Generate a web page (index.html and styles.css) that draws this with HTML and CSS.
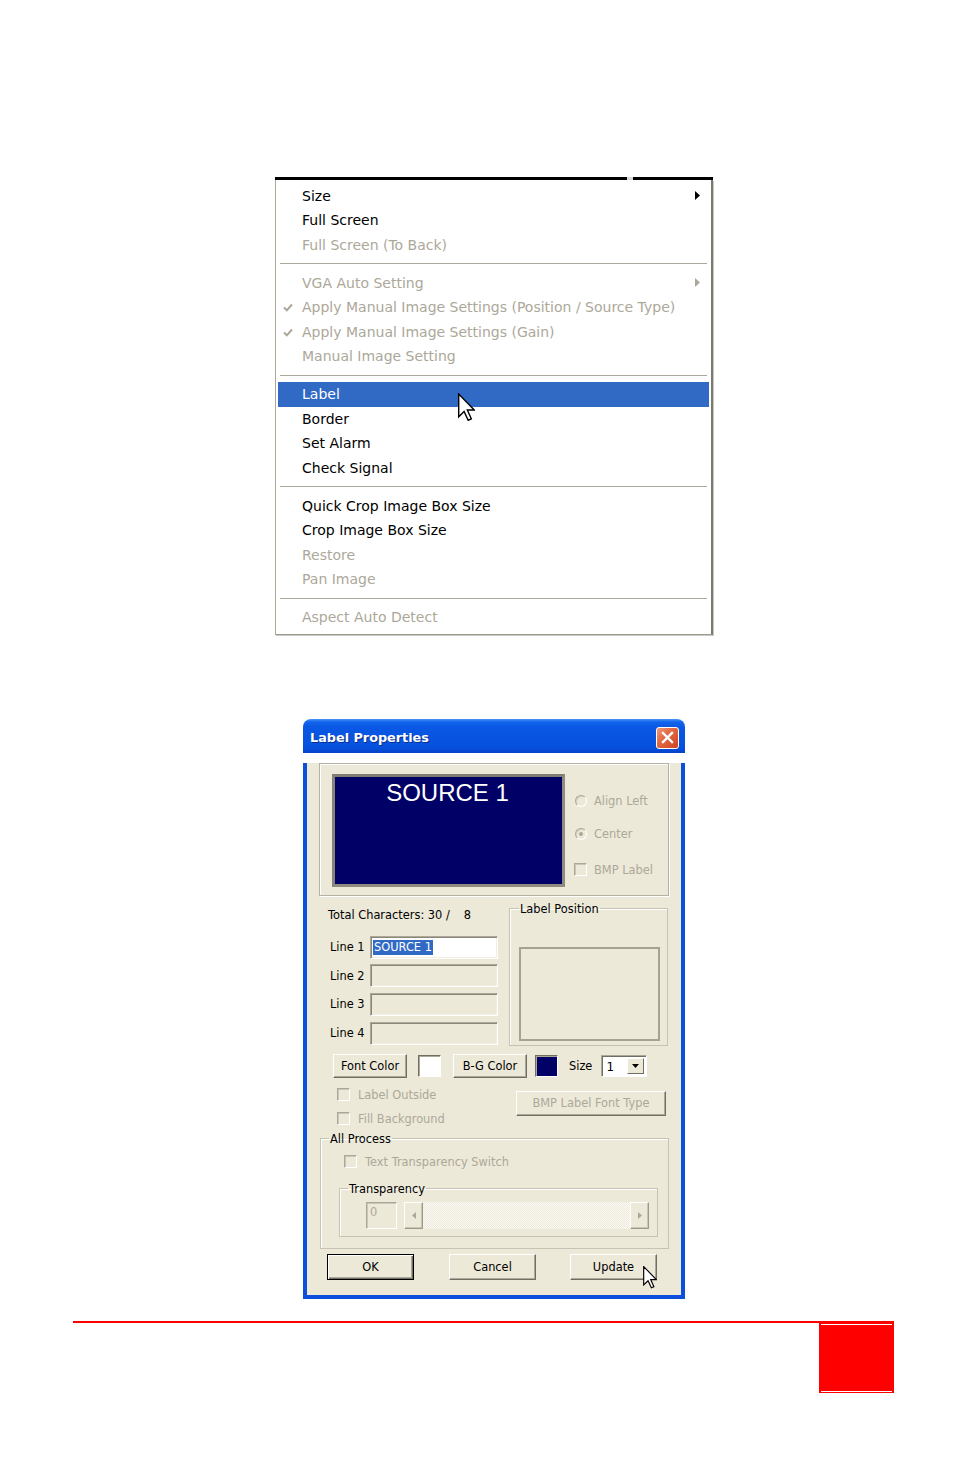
FILE: index.html
```html
<!DOCTYPE html>
<html lang="en">
<head>
<meta charset="utf-8">
<title>Label Properties</title>
<link rel="stylesheet" href="styles.css">
</head>
<body>
<div class="page">

  <div class="menu">
    <div class="menu-top"><span class="seg seg-a"></span><span class="notch"></span><span class="seg seg-b"></span></div>
    <div class="menu-body">
      <div class="item"><span class="chk"></span><span class="txt">Size</span><svg class="sub" viewBox="0 0 5 9" width="5" height="9"><polygon points="0,0 5,4.5 0,9" fill="#000"/></svg></div>
      <div class="item"><span class="chk"></span><span class="txt">Full Screen</span></div>
      <div class="item off"><span class="chk"></span><span class="txt">Full Screen (To Back)</span></div>
      <div class="sep"></div>
      <div class="item off"><span class="chk"></span><span class="txt">VGA Auto Setting</span><svg class="sub" viewBox="0 0 5 9" width="5" height="9"><polygon points="0,0 5,4.5 0,9" fill="#aca899"/></svg></div>
      <div class="item off"><span class="chk"><svg viewBox="0 0 10 9" width="10" height="9"><path d="M1 4.5 L3.8 7.3 L9 1.5" fill="none" stroke="#aca899" stroke-width="2"/></svg></span><span class="txt">Apply Manual Image Settings (Position / Source Type)</span></div>
      <div class="item off"><span class="chk"><svg viewBox="0 0 10 9" width="10" height="9"><path d="M1 4.5 L3.8 7.3 L9 1.5" fill="none" stroke="#aca899" stroke-width="2"/></svg></span><span class="txt">Apply Manual Image Settings (Gain)</span></div>
      <div class="item off"><span class="chk"></span><span class="txt">Manual Image Setting</span></div>
      <div class="sep"></div>
      <div class="item hot"><span class="chk"></span><span class="txt">Label</span>
        <svg class="cursor menu-cursor" viewBox="0 0 12 20" width="17" height="29"><path d="M0.5 0.5 L0.5 16.5 L4.3 12.8 L7.2 19 L9.4 18 L6.6 11.8 L11.5 11.8 Z" fill="#fff" stroke="#000" stroke-width="1" stroke-linejoin="miter"/></svg>
      </div>
      <div class="item"><span class="chk"></span><span class="txt">Border</span></div>
      <div class="item"><span class="chk"></span><span class="txt">Set Alarm</span></div>
      <div class="item"><span class="chk"></span><span class="txt">Check Signal</span></div>
      <div class="sep"></div>
      <div class="item"><span class="chk"></span><span class="txt">Quick Crop Image Box Size</span></div>
      <div class="item"><span class="chk"></span><span class="txt">Crop Image Box Size</span></div>
      <div class="item off"><span class="chk"></span><span class="txt">Restore</span></div>
      <div class="item off"><span class="chk"></span><span class="txt">Pan Image</span></div>
      <div class="sep"></div>
      <div class="item off"><span class="chk"></span><span class="txt">Aspect Auto Detect</span></div>
    </div>
  </div>

  <div class="dialog">
    <div class="titlebar">
      <span class="title">Label Properties</span>
      <span class="close"><svg viewBox="0 0 21 20" width="21" height="20"><path d="M6 5 L15 14 M15 5 L6 14" stroke="#fff" stroke-width="2.4" stroke-linecap="square"/></svg></span>
    </div>
    <div class="dbody">

      <div class="grp-top">
        <div class="preview"><span class="preview-text">SOURCE 1</span></div>
        <div class="opts">
          <div class="opt o1"><span class="radio"></span><span class="dis">Align Left</span></div>
          <div class="opt o2"><span class="radio on"></span><span class="dis">Center</span></div>
          <div class="opt o3"><span class="cbox"></span><span class="dis">BMP Label</span></div>
        </div>
      </div>

      <div class="mid">
        <div class="lines">
          <div class="total">Total Characters: 30 /<span class="count">8</span></div>
          <div class="lrow first"><span class="lname">Line 1</span><span class="edit white"><span class="sel">SOURCE 1</span></span></div>
          <div class="lrow"><span class="lname">Line 2</span><span class="edit"></span></div>
          <div class="lrow"><span class="lname">Line 3</span><span class="edit"></span></div>
          <div class="lrow"><span class="lname">Line 4</span><span class="edit"></span></div>
        </div>
        <fieldset class="fs pos">
          <legend>Label Position</legend>
          <div class="posbox"></div>
        </fieldset>
      </div>

      <div class="colors">
        <span class="btn b-font">Font Color</span>
        <span class="swatch sw-white"></span>
        <span class="btn b-bg">B-G Color</span>
        <span class="swatch sw-navy"></span>
        <span class="size-lbl">Size</span>
        <span class="combo"><span class="combo-val">1</span><span class="combo-btn"><svg viewBox="0 0 7 4" width="7" height="4"><polygon points="0,0 7,0 3.5,4" fill="#000"/></svg></span></span>
      </div>

      <div class="checks">
        <div class="ck-col">
          <div class="ck"><span class="cbox"></span><span class="dis">Label Outside</span></div>
          <div class="ck"><span class="cbox"></span><span class="dis">Fill Background</span></div>
        </div>
        <span class="btn b-bmp dis">BMP Label Font Type</span>
      </div>

      <fieldset class="fs allp">
        <legend>All Process</legend>
        <div class="ck tts"><span class="cbox"></span><span class="dis">Text Transparency Switch</span></div>
        <fieldset class="fs trans">
          <legend>Transparency</legend>
          <div class="trow">
            <span class="tval dis">0</span>
            <span class="scroll">
              <span class="sbtn"><svg viewBox="0 0 4 7" width="4" height="7"><polygon points="4,0 0,3.5 4,7" fill="#aca899"/></svg></span>
              <span class="track"></span>
              <span class="sbtn"><svg viewBox="0 0 4 7" width="4" height="7"><polygon points="0,0 4,3.5 0,7" fill="#aca899"/></svg></span>
            </span>
          </div>
        </fieldset>
      </fieldset>

      <div class="actions">
        <span class="btn act ok">OK</span>
        <span class="btn act cancel">Cancel</span>
        <span class="btn act update">Update
          <svg class="cursor dlg-cursor" viewBox="0 0 12 20" width="14" height="23"><path d="M0.5 0.5 L0.5 16.5 L4.3 12.8 L7.2 19 L9.4 18 L6.6 11.8 L11.5 11.8 Z" fill="#fff" stroke="#000" stroke-width="1"/></svg>
        </span>
      </div>

    </div>
  </div>

  <div class="footer"><div class="tab"><div class="tab-in"></div></div></div>

</div>
</body>
</html>
```

FILE: styles.css
```css
html, body { margin: 0; padding: 0; background: #fff; }
body { font-family: "DejaVu Sans", Verdana, sans-serif; }
.page { width: 954px; height: 1475px; overflow: hidden; padding-top: 177px; box-sizing: border-box; }

/* ---------- context menu ---------- */
.menu { margin-left: 275px; width: 438px; }
.menu-top { display: flex; height: 3px; }
.seg { background: #000; height: 3px; }
.seg-a { width: 352px; }
.notch { width: 6px; background: #d8d8d8; }
.seg-b { flex: 1; }
.menu-body {
  background: #fff;
  border-left: 1px solid #aca899;
  border-right: 2px solid #7b7970;
  border-bottom: 1px solid #9d9a8c;
  box-shadow: 1px 1px 0 #c9c9c9;
  padding: 3.5px 2px 4px 2px;
  font-size: 14px;
  color: #000;
}
.item { position: relative; display: flex; align-items: center; height: 24.5px; line-height: 24.5px; padding-right: 9px; }
.item .chk { width: 24px; flex: none; display: flex; align-items: center; }
.item .chk svg { margin-left: 5px; margin-top: 1px; }
.item .txt { flex: 1; white-space: nowrap; }
.item.off { color: #aca899; }
.item.hot { background: #316ac5; color: #fff; }
.sep { margin: 6px 2px 6.5px; height: 0; border-top: 1px solid #aca899; }
.sub { flex: none; }
.cursor { position: absolute; }
.menu-cursor { left: 180px; top: 11px; }

/* ---------- dialog ---------- */
.dialog { margin: 84px 0 0 303px; width: 382px; font-size: 11.4px; color: #000; }
.titlebar {
  height: 34px;
  box-sizing: border-box;
  border-radius: 8px 8px 0 0;
  background: linear-gradient(#4a94f8 0, #1264ec 3px, #0a58e4 8px, #0854e0 55%, #0650dc 85%, #0542cc 100%);
  display: flex;
  align-items: flex-start;
  padding: 0 6px 0 7px;
}
.title { flex: 1; color: #fff; font-weight: bold; font-size: 12.8px; line-height: 16px; margin-top: 11px; text-shadow: 1px 1px 0 #0a2e8c; }
.close {
  margin-top: 8px;
  width: 23px; height: 22px;
  box-sizing: border-box;
  border: 1px solid #fff;
  border-radius: 3px;
  background: linear-gradient(135deg, #ef9a7c 0%, #e06a44 40%, #cf4520 100%);
  display: flex; align-items: center; justify-content: center;
}
.dbody {
  background: #ece9d8;
  border: 4px solid #0b4fdc;
  border-top: none;
  padding-bottom: 15px;
}

.grp-top {
  margin: 10px 0 0 12px;
  width: 350px; height: 133px;
  box-sizing: border-box;
  border: 1px solid #b5b2a3;
  box-shadow: inset 1px 1px 0 #fff, 1px 1px 0 #fff;
  padding: 10px 0 0 12px;
  display: flex;
}
.preview {
  width: 233px; height: 113px; box-sizing: border-box;
  background: #000066;
  border: 3px solid #8f8c7f;
  border-top-color: #7f7d72; border-left-color: #86837a;
  text-align: center;
  padding-top: 2px;
}
.preview-text { font-family: "Liberation Sans", Arial, sans-serif; font-size: 24px; line-height: 28px; color: #fff; margin-left: -2px; }
.opts { margin-left: 9px; }
.opt { display: flex; align-items: center; height: 22px; }
.opt.o1 { margin-top: 16px; }
.opt.o2 { margin-top: 11px; }
.opt.o3 { margin-top: 14px; }
.opt .radio { margin-left: 1px; margin-right: 7px; }
.opt .cbox { margin-right: 7px; }
.dis { color: #aca899; }

.radio {
  width: 12px; height: 12px; border-radius: 50%;
  box-sizing: border-box; flex: none;
  border: 1px solid; border-color: #aca899 #fff #fff #aca899;
  box-shadow: inset 1px 1px 0 #d4d0c4;
  display: inline-flex; align-items: center; justify-content: center;
}
.radio.on::after { content: ""; width: 4px; height: 4px; border-radius: 50%; background: #aca899; }
.cbox {
  width: 13px; height: 13px; box-sizing: border-box; flex: none;
  border: 1px solid; border-color: #aca899 #fff #fff #aca899;
  box-shadow: inset 1px 1px 0 #c9c6b8;
  background: #ece9d8;
}

.mid { display: flex; margin-top: 6px; }
.lines { margin-left: 21px; width: 181px; padding-top: 4px; }
.total { line-height: 18px; height: 18px; white-space: nowrap; }
.count { margin-left: 14px; }
.lrow { display: flex; align-items: center; height: 23px; margin-top: 5.7px; }
.lrow.first { margin-top: 12px; }
.lname { width: 42px; padding-left: 2px; box-sizing: border-box; flex: none; }
.edit {
  width: 128px; height: 23px; box-sizing: border-box; flex: none;
  border: 1px solid; border-color: #aca899 #fff #fff #aca899;
  box-shadow: inset 1px 1px 0 #8a877a, inset -1px -1px 0 #f1efe2;
  background: #ece9d8;
  display: flex; align-items: center;
  padding-left: 2px;
}
.edit.white { background: #fff; }
.sel { background: #316ac5; color: #fff; line-height: 15px; padding: 0 1px; }

.fs { margin: 0; min-width: 0; border: 1px solid #c6c3b4; box-shadow: inset 1px 1px 0 #fff; }
.fs legend { padding: 0 1px; line-height: 14px; font-size: 11.4px; }
.pos { width: 159px; box-sizing: border-box; padding: 0 7px 4px 9px; }
.posbox { margin-top: 31px; width: 141px; height: 94px; box-sizing: border-box; border: 2px solid #a5a295; }

.colors { display: flex; align-items: center; margin: 8px 0 0 26px; height: 24px; }
.btn {
  display: inline-flex; align-items: center; justify-content: center;
  box-sizing: border-box;
  background: #ece9d8;
  border: 1px solid; border-color: #fff #716f64 #716f64 #fff;
  box-shadow: inset -1px -1px 0 #aca899;
  white-space: nowrap;
}
.b-font { width: 74px; height: 24px; }
.b-bg { width: 74px; height: 24px; margin-left: 12px; }
.swatch {
  width: 23px; height: 22px; box-sizing: border-box; flex: none;
  border: 1px solid; border-color: #716f64 #fff #fff #716f64;
  box-shadow: inset 1px 1px 0 #aca899;
}
.sw-white { background: #fff; margin-left: 11px; }
.sw-navy { background: #000066; margin-left: 8px; }
.size-lbl { margin-left: 11px; }
.combo {
  margin-left: 9px;
  width: 46px; height: 22px; box-sizing: border-box;
  border: 1px solid; border-color: #aca899 #fff #fff #aca899;
  box-shadow: inset 1px 1px 0 #716f64;
  background: #fff;
  display: flex; align-items: center;
  padding: 2px 2px 2px 4px;
}
.combo-val { flex: 1; font-size: 12px; padding-top: 2px; }
.combo-btn {
  width: 17px; height: 16px; box-sizing: border-box;
  background: #ece9d8;
  border: 1px solid; border-color: #fff #716f64 #716f64 #fff;
  display: flex; align-items: center; justify-content: center;
}

.checks { display: flex; margin-top: 5px; }
.ck-col { margin-left: 30px; width: 179px; }
.ck { display: flex; align-items: center; height: 24px; }
.ck .cbox { margin-right: 8px; }
.b-bmp { width: 150px; height: 25px; margin-top: 8px; }

.allp { margin: 1px 0 0 13px; width: 349px; box-sizing: border-box; padding: 0 10px 11px 8px; }
.tts { height: 22px; margin: 5px 0 0 15px; }
.trans { margin: 9px 0 0 10px; padding: 0 8px 7px 8px; }
.trow { display: flex; margin: 6px 0 0 18px; height: 27px; }
.tval {
  width: 31px; height: 27px; box-sizing: border-box;
  border: 1px solid; border-color: #aca899 #fff #fff #aca899;
  box-shadow: inset 1px 1px 0 #c9c6b8;
  padding: 2px 0 0 3px; line-height: 14px;
}
.scroll { display: flex; width: 245px; height: 27px; margin-left: 7px; }
.sbtn {
  width: 19px; height: 27px; box-sizing: border-box; flex: none;
  background: #ece9d8;
  border: 1px solid; border-color: #fff #9d9a8c #9d9a8c #fff;
  box-shadow: inset -1px -1px 0 #c9c6b8;
  display: flex; align-items: center; justify-content: center;
}
.track {
  flex: 1;
  background-color: #f4f2ea;
  background-image: repeating-conic-gradient(#ece9d8 0 25%, #fbfaf6 0 50%);
  background-size: 2px 2px;
}

.actions { display: flex; margin: 5px 0 0 20px; }
.act { width: 87px; height: 26px; position: relative; }
.ok { border: 1px solid #000; box-shadow: inset 1px 1px 0 #fff, inset -1px -1px 0 #716f64, inset -2px -2px 0 #aca899; }
.cancel { margin-left: 35px; }
.update { margin-left: 34px; }
.dlg-cursor { left: 72px; top: 11px; }

/* ---------- footer ---------- */
.footer { margin: 22px 0 0 73px; width: 821px; border-top: 2px solid #ff0000; }
.tab { margin-left: auto; width: 75px; height: 70px; background: #ff0000; box-sizing: border-box; padding: 1px 2px; }
.tab-in { height: 68px; box-sizing: border-box; border-top: 1px solid #fff; border-bottom: 1px solid #fff; }
```
